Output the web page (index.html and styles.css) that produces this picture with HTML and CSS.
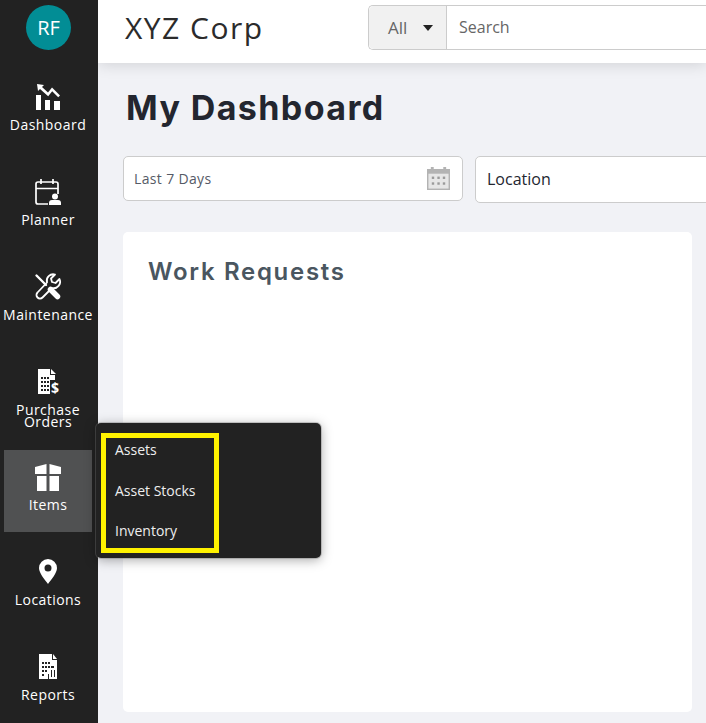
FILE: index.html
```html
<!DOCTYPE html>
<html lang="en">
<head>
<meta charset="utf-8">
<title>XYZ Corp</title>
<link rel="stylesheet" href="styles.css">
</head>
<body>
<div class="app">
  <aside class="sidebar">
    <div class="avatar">RF</div>
    <nav class="nav">
      <a class="nav-item">
        <svg class="nav-icon" viewBox="0 0 26 26" fill="#fff"><path d="M1 11h5v15H1zM10 16h5v10h-5zM19 17h6v9h-6z"/><path d="M2 0l7 1-2 2 6 5.500 4-5 8 8-1.800 1.800-6-6-4 5L5 5 3 7z"/></svg>
        <span class="nav-label">Dashboard</span>
      </a>
      <a class="nav-item">
        <svg class="nav-icon" viewBox="0 0 26 26" fill="none" stroke="#fff" stroke-width="1.700"><path d="M13 25H3a2 2 0 0 1-2-2V5a2 2 0 0 1 2-2h18a2 2 0 0 1 2 2v10M1 9.500h22M6 0v5M18 0v5"/><circle cx="20" cy="17.500" r="3" fill="#fff" stroke="none"/><path d="M14 26v-2a3 3 0 0 1 3-3h6a3 3 0 0 1 3 3v2z" fill="#fff" stroke="none"/></svg>
        <span class="nav-label">Planner</span>
      </a>
      <a class="nav-item">
        <svg class="nav-icon" viewBox="0 0 26 26" fill="none" stroke="#fff"><path stroke-width="1.800" stroke-linejoin="round" d="M24.500 5l-4 4-3.500-1-1-3.500 4-4a6.500 6.500 0 0 0-8 8L2.500 18.500a3.500 3.500 0 0 0 5 5L17 14a6.500 6.500 0 0 0 7.500-9z"/><path stroke-width="2.400" stroke-linecap="round" d="M1.500 1.500L11 11"/><path stroke-width="5.500" stroke-linecap="round" d="M15.500 15.500l7 7"/></svg>
        <span class="nav-label">Maintenance</span>
      </a>
      <a class="nav-item">
        <svg class="nav-icon nav-icon-open" viewBox="0 0 26 26" fill="#fff"><path fill-rule="evenodd" d="M3 0h12v6h5v5h-5v14H3zM6 8v2h2V8zm3 0v2h2V8zm3 0v2h2V8zM6 12v2h2v-2zm3 0v2h2v-2zm3 0v2h2v-2zM6 16v2h2v-2zm3 0v2h2v-2zm3 0v2h2v-2zM6 20v2h2v-2zm3 0v2h2v-2zm3 0v2h2v-2z"/><path d="M16 0l5 5h-5z"/><text x="16" y="24" class="dollar">$</text></svg>
        <span class="nav-label nav-label-tight">Purchase Orders</span>
      </a>
      <a class="nav-item nav-item-active">
        <svg class="nav-icon" viewBox="0 0 26 26" fill="#fff"><path d="M0 3l11.500-3v10H0zM14.500 0L26 3v7H14.500zM2 12h9.500v15H2zM14.500 12H24v15h-9.500z"/></svg>
        <span class="nav-label">Items</span>
      </a>
      <a class="nav-item">
        <svg class="nav-icon" viewBox="0 0 26 26" fill="#fff"><path fill-rule="evenodd" d="M13 0a9 9 0 0 1 9 9c0 5-6 12-9 16-3-4-9-11-9-16a9 9 0 0 1 9-9zm0 5.500a3.500 3.500 0 1 0 0 7 3.500 3.500 0 0 0 0-7z"/></svg>
        <span class="nav-label">Locations</span>
      </a>
      <a class="nav-item">
        <svg class="nav-icon" viewBox="0 0 26 26" fill="#fff"><path fill-rule="evenodd" d="M4 0h13v6h5v19H4zM7 8v2h2V8zm3 0v2h2V8zm3 0v2h2V8zM7 12v2h2v-2zm3 0v2h2v-2zm3 0v2h2v-2zm3 0v2h3v-2zM7 16v2h2v-2zm3 0v2h2v-2zm6 0v7h1v-7zm3 0v7h1v-7zM7 20v2h2v-2zm6 0v5h1v-5z"/><path d="M18 0l4 5h-4z"/></svg>
        <span class="nav-label">Reports</span>
      </a>
    </nav>
  </aside>

  <div class="content">
    <header class="topbar">
      <div class="brand">XYZ Corp</div>
      <div class="search">
        <div class="search-scope"><span class="scope-label">All</span><span class="caret"></span></div>
        <div class="search-input">Search</div>
      </div>
    </header>

    <main class="main">
      <h1 class="page-title">My Dashboard</h1>
      <div class="filters">
        <div class="filter filter-date">
          <span>Last 7 Days</span>
          <svg class="cal-icon" viewBox="0 0 24 24"><path fill="#b3b3b3" d="M4 0h3v2h10V0h3v2h4v22H0V2h4z"/><rect x="1.500" y="7" width="21" height="15.500" fill="#e6e6e6"/><g fill="#9a9a9a"><rect x="5" y="10" width="2.500" height="2.500"/><rect x="10.800" y="10" width="2.500" height="2.500"/><rect x="16.500" y="10" width="2.500" height="2.500"/><rect x="5" y="16" width="2.500" height="2.500"/><rect x="10.800" y="16" width="2.500" height="2.500"/><rect x="16.500" y="16" width="2.500" height="2.500"/></g></svg>
        </div>
        <div class="filter filter-location">Location</div>
      </div>
      <section class="card">
        <h2 class="card-title">Work Requests</h2>
      </section>
    </main>
  </div>

  <div class="flyout">
    <div class="flyout-highlight"></div>
    <a class="flyout-item">Assets</a>
    <a class="flyout-item">Asset Stocks</a>
    <a class="flyout-item">Inventory</a>
  </div>
</div>
</body>
</html>
```

FILE: styles.css
```css
* { box-sizing: border-box; }

html, body {
  margin: 0;
  height: 100%;
  overflow: hidden;
}

body {
  font-family: "Open Sans", sans-serif;
  background: #f1f2f6;
}

.app {
  position: relative;
  display: flex;
  height: 723px;
  overflow: hidden;
}

.sidebar {
  flex: 0 0 98px;
  min-width: 0;
  background: #222;
  display: flex;
  flex-direction: column;
  align-items: center;
  padding-top: 5px;
  z-index: 3;
}

.avatar {
  width: 45px;
  height: 45px;
  margin-right: 1px;
  border-radius: 50%;
  background: #028d95;
  color: #fff;
  font-size: 20px;
  display: flex;
  align-items: center;
  justify-content: center;
  flex: none;
}

.nav {
  margin-top: 20px;
  display: flex;
  flex-direction: column;
  gap: 13px;
  width: 100%;
  padding: 0 6px 0 4px;
}

.nav-item {
  height: 82px;
  padding-top: 14px;
  display: flex;
  flex-direction: column;
  align-items: center;
  color: #fff;
}

.nav-item-active {
  background: #505152;
}

.nav-icon {
  width: 26px;
  height: 26px;
  flex: none;
  overflow: visible;
}

.dollar {
  font-family: "Open Sans", sans-serif;
  font-size: 14px;
  font-weight: 700;
  fill: #fff;
}

.nav-label {
  margin-top: 6px;
  font-size: 14px;
  line-height: 17px;
  letter-spacing: .45px;
  text-align: center;
  white-space: nowrap;
}

.nav-label-tight {
  width: 84px;
  white-space: normal;
  line-height: 12px;
  margin-top: 9px;
}

.content {
  flex: 1;
  min-width: 0;
  display: flex;
  flex-direction: column;
}

.topbar {
  height: 63px;
  flex: none;
  background: #fff;
  box-shadow: 0 2px 14px rgba(0, 0, 0, .13);
  display: flex;
  align-items: flex-start;
  position: relative;
  z-index: 1;
}

.brand {
  margin: 9px 0 0 27px;
  width: 243px;
  font-size: 30px;
  line-height: 38px;
  letter-spacing: 1.5px;
  color: #2b2b2b;
  flex: none;
}

.search {
  flex: none;
  width: 400px;
  height: 45px;
  margin-top: 5px;
  display: flex;
  border: 1px solid #ccc;
  border-right: 0;
  border-radius: 5px 0 0 5px;
  font-size: 16px;
  color: #666;
}

.search-scope {
  width: 78px;
  background: #f1f1f1;
  border-right: 1px solid #ccc;
  border-radius: 5px 0 0 5px;
  display: flex;
  align-items: center;
  padding-left: 19px;
  gap: 16px;
}

.scope-label {
  font-size: 17px;
}

.caret {
  width: 0;
  height: 0;
  border-left: 5px solid transparent;
  border-right: 5px solid transparent;
  border-top: 6px solid #222;
}

.search-input {
  flex: 1;
  background: #fff;
  padding-left: 12px;
  line-height: 43px;
}

.main {
  flex: 1;
  padding: 0 14px 0 25px;
}

.page-title {
  margin: 24px 0 0 3px;
  font-family: Inter, sans-serif;
  font-size: 34px;
  line-height: 42px;
  font-weight: 700;
  letter-spacing: 1.4px;
  color: #23262f;
}

.filters {
  display: flex;
  align-items: flex-start;
  gap: 12px;
  margin-top: 27px;
  width: 620px;
}

.filter {
  background: #fff;
  border: 1px solid #ccc;
  border-radius: 5px;
  flex: none;
}

.filter-date {
  width: 340px;
  height: 45px;
  padding: 0 12px 0 10px;
  display: flex;
  align-items: center;
  justify-content: space-between;
  font-size: 14px;
  letter-spacing: .35px;
  color: #555a66;
}

.cal-icon {
  width: 23px;
  height: 23px;
}

.filter-location {
  width: 300px;
  height: 47px;
  padding-left: 11px;
  line-height: 45px;
  font-size: 16px;
  color: #23262f;
}

.card {
  margin-top: 29px;
  width: 569px;
  height: 480px;
  background: #fff;
  border-radius: 5px;
  padding: 25px 25px;
}

.card-title {
  margin: 0;
  font-family: Inter, sans-serif;
  font-size: 24px;
  line-height: 30px;
  font-weight: 600;
  letter-spacing: 1.7px;
  color: #4a5660;
}

.flyout {
  position: absolute;
  left: 96px;
  top: 423px;
  width: 225px;
  height: 135px;
  background: #222;
  border-radius: 5px;
  box-shadow: 0 0 0 1px rgba(120, 120, 120, .35), 0 2px 12px rgba(0, 0, 0, .35);
  padding: 18px 0 0 19px;
  z-index: 4;
  display: flex;
  flex-direction: column;
  gap: 22.500px;
}

.flyout-item {
  position: relative;
  font-size: 14px;
  line-height: 18px;
  font-weight: 500;
  color: #eee;
}

.flyout-highlight {
  position: absolute;
  left: 5px;
  top: 10px;
  width: 118px;
  height: 120px;
  border: 5px solid #fff200;
}
```
